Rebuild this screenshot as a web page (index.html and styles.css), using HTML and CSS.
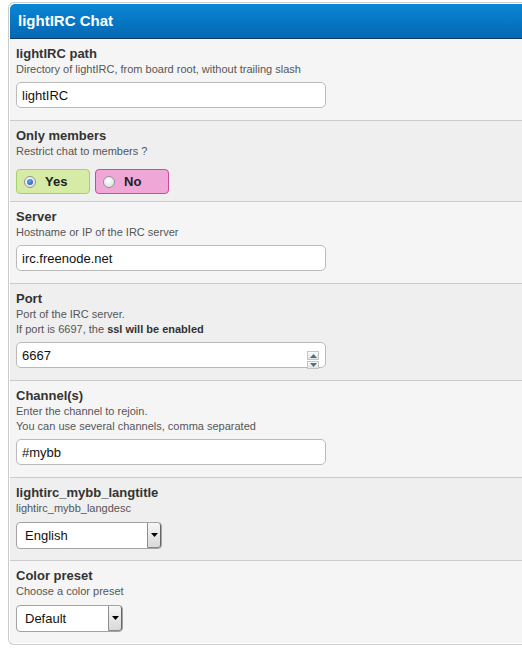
FILE: index.html
```html
<!DOCTYPE html>
<html>
<head>
<meta charset="utf-8">
<title>lightIRC Chat</title>
<link rel="stylesheet" href="styles.css">
</head>
<body>
<div class="border-wrapper">
  <div class="title">lightIRC Chat</div>

  <div class="setting alt1">
    <div class="s-title">lightIRC path</div>
    <div class="s-desc">Directory of lightIRC, from board root, without trailing slash</div>
    <input class="text-input" type="text" value="lightIRC">
  </div>

  <div class="setting alt2 setting-radio">
    <div class="s-title">Only members</div>
    <div class="s-desc">Restrict chat to members ?</div>
    <div class="yesno">
      <label class="opt opt-yes"><span class="radio radio-on"></span>Yes</label>
      <label class="opt opt-no"><span class="radio"></span>No</label>
    </div>
  </div>

  <div class="setting alt1">
    <div class="s-title">Server</div>
    <div class="s-desc">Hostname or IP of the IRC server</div>
    <input class="text-input" type="text" value="irc.freenode.net">
  </div>

  <div class="setting alt2">
    <div class="s-title">Port</div>
    <div class="s-desc">Port of the IRC server.<br>If port is 6697, the <b>ssl will be enabled</b></div>
    <div class="number-wrap">
      <input class="text-input" type="text" value="6667">
      <span class="spinner">
        <span class="spin spin-up"><svg width="7" height="4" viewBox="0 0 7 4"><path d="M0 4 L3.5 0 L7 4 Z" fill="#4a6d95"/></svg></span>
        <span class="spin spin-down"><svg width="7" height="4" viewBox="0 0 7 4"><path d="M0 0 L3.5 4 L7 0 Z" fill="#4a6d95"/></svg></span>
      </span>
    </div>
  </div>

  <div class="setting alt1">
    <div class="s-title">Channel(s)</div>
    <div class="s-desc">Enter the channel to rejoin.<br>You can use several channels, comma separated</div>
    <input class="text-input" type="text" value="#mybb">
  </div>

  <div class="setting alt2 setting-select">
    <div class="s-title">lightirc_mybb_langtitle</div>
    <div class="s-desc">lightirc_mybb_langdesc</div>
    <div class="select-wrap select-lang">
      <select class="select"><option>English</option></select>
      <span class="select-btn"><svg width="7" height="4" viewBox="0 0 7 4"><path d="M0 0 L7 0 L3.5 4 Z" fill="#000"/></svg></span>
    </div>
  </div>

  <div class="setting alt1 setting-select last">
    <div class="s-title">Color preset</div>
    <div class="s-desc">Choose a color preset</div>
    <div class="select-wrap select-color">
      <select class="select"><option>Default</option></select>
      <span class="select-btn"><svg width="7" height="4" viewBox="0 0 7 4"><path d="M0 0 L7 0 L3.5 4 Z" fill="#000"/></svg></span>
    </div>
  </div>
</div>
</body>
</html>
```

FILE: styles.css
```css
body {
  margin: 2px 0 0 8px;
  background: #fff;
  font-family: "Liberation Sans", Arial, sans-serif;
  color: #333;
}
.border-wrapper {
  border: 1px solid #cccccc;
  border-right: 0;
  border-radius: 6px 0 0 6px;
  padding: 1px 0 1px 1px;
  background: #fff;
  overflow: hidden;
}
.title {
  background: linear-gradient(#0a86d6, #0568b2);
  border-bottom: 1px solid #0d3d60;
  border-radius: 5px 0 0 0;
  color: #fff;
  font-weight: bold;
  font-size: 15px;
  line-height: 18px;
  padding: 8px 8px;
}
.setting {
  padding: 6px 6px 12px;
  border-bottom: 1px solid #cccccc;
}
.setting.last {
  border-bottom: 0;
}
.alt1 { background: #f5f5f5; }
.alt2 { background: #efefef; }
.setting-radio { padding-bottom: 7px; }
.setting-select { padding-bottom: 11px; }

.s-title {
  font-weight: bold;
  font-size: 13px;
  line-height: 17px;
  color: #333;
}
.s-desc {
  font-size: 11px;
  line-height: 15px;
  color: #555;
}
.s-desc b { color: #333; }

.text-input {
  display: block;
  box-sizing: border-box;
  margin: 5px 0 0;
  width: 310px;
  height: 26px;
  border: 1px solid #bababa;
  border-radius: 5px;
  background: #fff;
  padding: 0 5px;
  font-family: "Liberation Sans", Arial, sans-serif;
  font-size: 13px;
  color: #111;
  outline: none;
}
.number-wrap {
  position: relative;
  width: 310px;
}
.spinner {
  position: absolute;
  right: 7px;
  top: 9px;
  width: 12px;
  display: flex;
  flex-direction: column;
  gap: 1px;
}
.spin {
  height: 8px;
  display: flex;
  align-items: center;
  justify-content: center;
  background: linear-gradient(#fafafa, #e2e2e2);
  border: 1px solid #c4c4c4;
  box-sizing: border-box;
}
.spin-up { height: 9px; }

.yesno {
  display: flex;
  gap: 5px;
  margin-top: 10px;
}
.opt {
  box-sizing: border-box;
  width: 74px;
  height: 25px;
  border-radius: 4px;
  display: flex;
  align-items: center;
  padding-left: 7px;
  gap: 9px;
  font-weight: bold;
  font-size: 13px;
  color: #222;
}
.opt-yes {
  background: #d6eba5;
  border: 1px solid #a5d16c;
}
.opt-no {
  background: #efa7d7;
  border: 1px solid #d2479b;
}
.radio {
  box-sizing: border-box;
  width: 12px;
  height: 12px;
  border-radius: 50%;
  border: 1px solid #8f9499;
  background: radial-gradient(circle at 40% 35%, #ffffff, #d8d8d8);
  position: relative;
}
.radio-on::after {
  content: "";
  position: absolute;
  left: 2px;
  top: 2px;
  width: 6px;
  height: 6px;
  border-radius: 50%;
  background: radial-gradient(circle at 40% 35%, #6aa6ea, #1d4f9e);
}

.select-wrap {
  position: relative;
  margin-top: 6px;
  height: 27px;
}
.select-lang { width: 146px; }
.select-color { width: 107px; }
.select {
  appearance: none;
  -webkit-appearance: none;
  box-sizing: border-box;
  width: 100%;
  height: 27px;
  border: 1px solid #a3a3a3;
  border-radius: 4px;
  background: #fff;
  padding: 0 8px;
  font-family: "Liberation Sans", Arial, sans-serif;
  font-size: 13px;
  color: #111;
  outline: none;
}
.select-btn {
  position: absolute;
  right: 1px;
  top: 1px;
  bottom: 1px;
  width: 14px;
  display: flex;
  align-items: center;
  justify-content: center;
  background: linear-gradient(#f7f7f7, #d9d9d9);
  border-left: 1px solid #8d8d8d;
  border-right: 1px solid #666;
  border-bottom: 1px solid #888;
  border-radius: 0 3px 3px 0;
  box-sizing: border-box;
}
```
